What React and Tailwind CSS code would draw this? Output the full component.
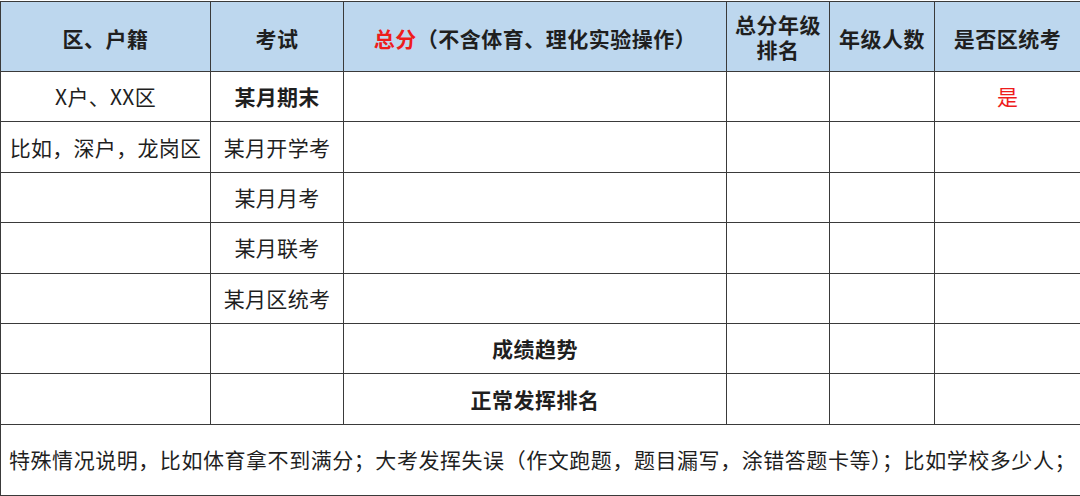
import React from "react";

const rows = [
  { area: "X户、XX区", exam: "某月期末", examBold: true, total: "", yes: "是" },
  { area: "比如，深户，龙岗区", exam: "某月开学考" },
  { area: "", exam: "某月月考" },
  { area: "", exam: "某月联考" },
  { area: "", exam: "某月区统考" },
  { area: "", exam: "", total: "成绩趋势" },
  { area: "", exam: "", total: "正常发挥排名" },
];

export default function App() {
  const cell = "border border-[#3a3a3a] text-center align-middle p-0";
  return (
    <div className="w-[1080px] h-[496px] bg-white font-['Noto_Sans_CJK_SC',sans-serif] text-[#1f1f1f]">
      <table className="border-collapse table-fixed w-[1080px] mt-px">
        <colgroup>
          <col className="w-[210px]" />
          <col className="w-[133px]" />
          <col className="w-[383px]" />
          <col className="w-[103px]" />
          <col className="w-[105px]" />
          <col className="w-[146px]" />
        </colgroup>
        <thead>
          <tr className="h-[70px] bg-[#bdd7ee] text-[21px] font-bold leading-[25px] tracking-[0.5px]">
            <th className={cell + " pt-1"}>区、户籍</th>
            <th className={cell + " pt-1"}>考试</th>
            <th className={cell + " pt-1"}>
              <span className="text-[#ee1c1c]">总分</span>（不含体育、理化实验操作）
            </th>
            <th className={cell + " px-1"}>总分年级排名</th>
            <th className={cell + " pt-1"}>年级人数</th>
            <th className={cell + " pt-1"}>是否区统考</th>
          </tr>
        </thead>
        <tbody className="text-[21px] leading-[25px]">
          {rows.map((r, i) => (
            <tr key={i} className="h-[50.4px]">
              <td className={cell + " tracking-[0.3px]"}>{r.area}</td>
              <td className={cell + " tracking-[0.3px]" + (r.examBold ? " font-bold" : "")}>{r.exam}</td>
              <td className={cell + " font-bold tracking-[0.5px]"}>{r.total}</td>
              <td className={cell}></td>
              <td className={cell}></td>
              <td className={cell + " text-[#ee1c1c]"}>{r.yes}</td>
            </tr>
          ))}
          <tr className="h-[71px]">
            <td colSpan={6} className="border border-[#3a3a3a] text-left align-middle pl-2 text-[21px] tracking-[0.55px]">
              特殊情况说明，比如体育拿不到满分；大考发挥失误（作文跑题，题目漏写，涂错答题卡等）；比如学校多少人；
            </td>
          </tr>
        </tbody>
      </table>
    </div>
  );
}
